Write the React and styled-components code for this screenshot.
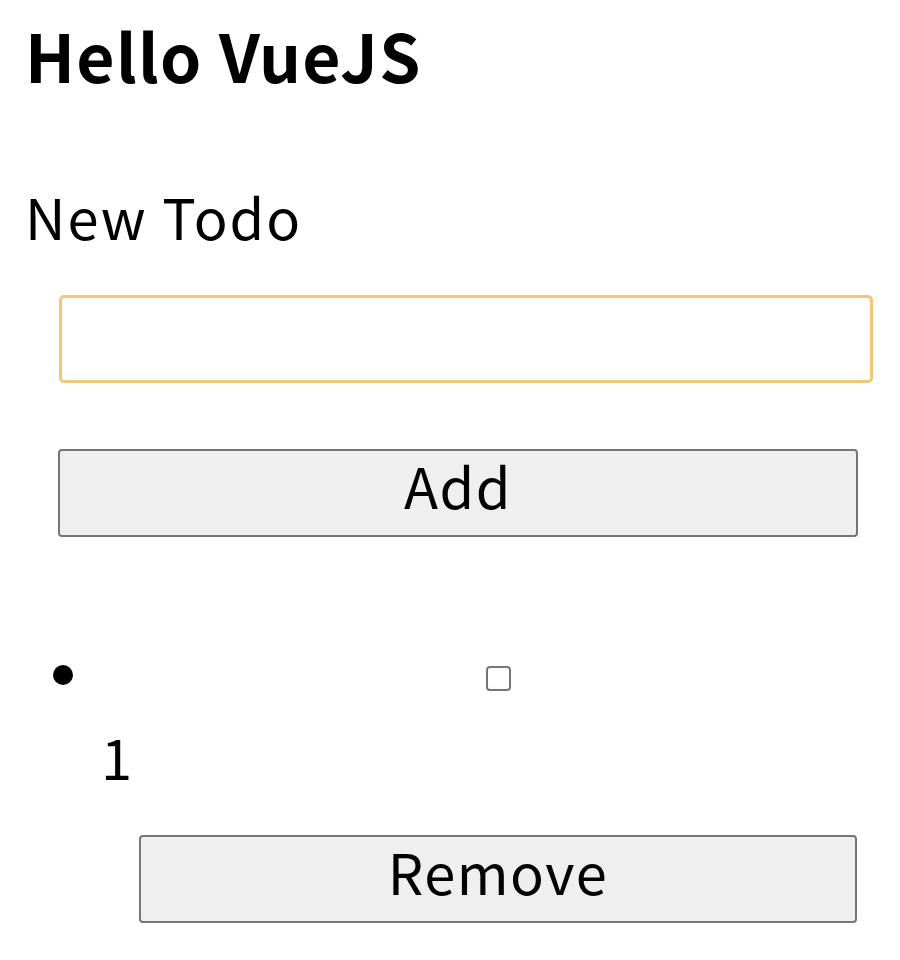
import React, { useState } from 'react';
import styled, { createGlobalStyle } from 'styled-components';

const GlobalStyle = createGlobalStyle`
  html, body {
    margin: 0;
    padding: 0;
    background: #ffffff;
  }
  body {
    font-family: "Noto Sans CJK KR", "Noto Sans", sans-serif;
    color: #000000;
  }
`;

const Page = styled.div`
  padding: 21px 25px 0 25px;
`;

const Title = styled.h1`
  margin: 0;
  font-size: 66px;
  line-height: 66px;
  font-weight: 700;
  letter-spacing: 1.3px;
`;

const FieldLabel = styled.div`
  margin-top: 101px;
  font-size: 56px;
  line-height: 56px;
  font-weight: 400;
  letter-spacing: 2px;
`;

const TodoInput = styled.input`
  display: block;
  box-sizing: border-box;
  margin: 51px 0 0 34px;
  width: 814px;
  height: 88px;
  border: 3px solid #f0c878;
  border-radius: 5px;
  background: #ffffff;
  font-family: inherit;
  font-size: 40px;
  padding: 0 12px;
  outline: none;
`;

const ActionButton = styled.button`
  display: block;
  box-sizing: border-box;
  margin: ${(p) => p.$top}px 0 0 ${(p) => p.$left}px;
  width: ${(p) => p.$width}px;
  height: 88px;
  padding: 0 0 17px 0;
  background: #efefef;
  border: 2px solid #767676;
  border-radius: 4px;
  font-family: inherit;
  font-size: 56px;
  line-height: 56px;
  letter-spacing: 1.5px;
  color: #000000;
  cursor: pointer;
`;

const TodoList = styled.ul`
  list-style: none;
  margin: 123px 0 0 28px;
  padding: 0;
`;

const TodoItem = styled.li`
  display: grid;
  grid-template-columns: 20px 1fr;
  column-gap: 24px;
`;

const Bullet = styled.span`
  width: 20px;
  height: 20px;
  margin-top: 5px;
  border-radius: 50%;
  background: #000000;
`;

const ItemBody = styled.div`
  display: flex;
  flex-direction: column;
`;

const CheckRow = styled.div`
  display: flex;
  justify-content: center;
  margin: 6px 0 0 42px;
  width: 718px;
`;

const Check = styled.input`
  appearance: none;
  margin: 0;
  width: 25px;
  height: 25px;
  box-sizing: border-box;
  border: 2px solid #767676;
  border-radius: 4px;
  background: #ffffff;
  cursor: pointer;
  &:checked {
    background: #0075ff;
    border-color: #0075ff;
  }
`;

const ItemText = styled.div`
  margin-top: 37px;
  padding-left: 4px;
  font-size: 56px;
  line-height: 56px;
`;

export default function App() {
  const [text, setText] = useState('');
  const [todos, setTodos] = useState([{ id: 1, text: '1', done: false }]);

  const addTodo = () => {
    if (!text.trim()) return;
    setTodos((prev) => [...prev, { id: Date.now(), text, done: false }]);
    setText('');
  };

  const toggle = (id) =>
    setTodos((prev) => prev.map((t) => (t.id === id ? { ...t, done: !t.done } : t)));

  const remove = (id) => setTodos((prev) => prev.filter((t) => t.id !== id));

  return (
    <Page>
      <GlobalStyle />
      <Title>Hello VueJS</Title>
      <FieldLabel>New Todo</FieldLabel>
      <TodoInput value={text} onChange={(e) => setText(e.target.value)} />
      <ActionButton $top={66} $left={33} $width={800} onClick={addTodo}>
        Add
      </ActionButton>
      <TodoList>
        {todos.map((todo) => (
          <TodoItem key={todo.id}>
            <Bullet />
            <ItemBody>
              <CheckRow>
                <Check type="checkbox" checked={todo.done} onChange={() => toggle(todo.id)} />
              </CheckRow>
              <ItemText>{todo.text}</ItemText>
              <ActionButton $top={51} $left={42} $width={718} onClick={() => remove(todo.id)}>
                Remove
              </ActionButton>
            </ItemBody>
          </TodoItem>
        ))}
      </TodoList>
    </Page>
  );
}
